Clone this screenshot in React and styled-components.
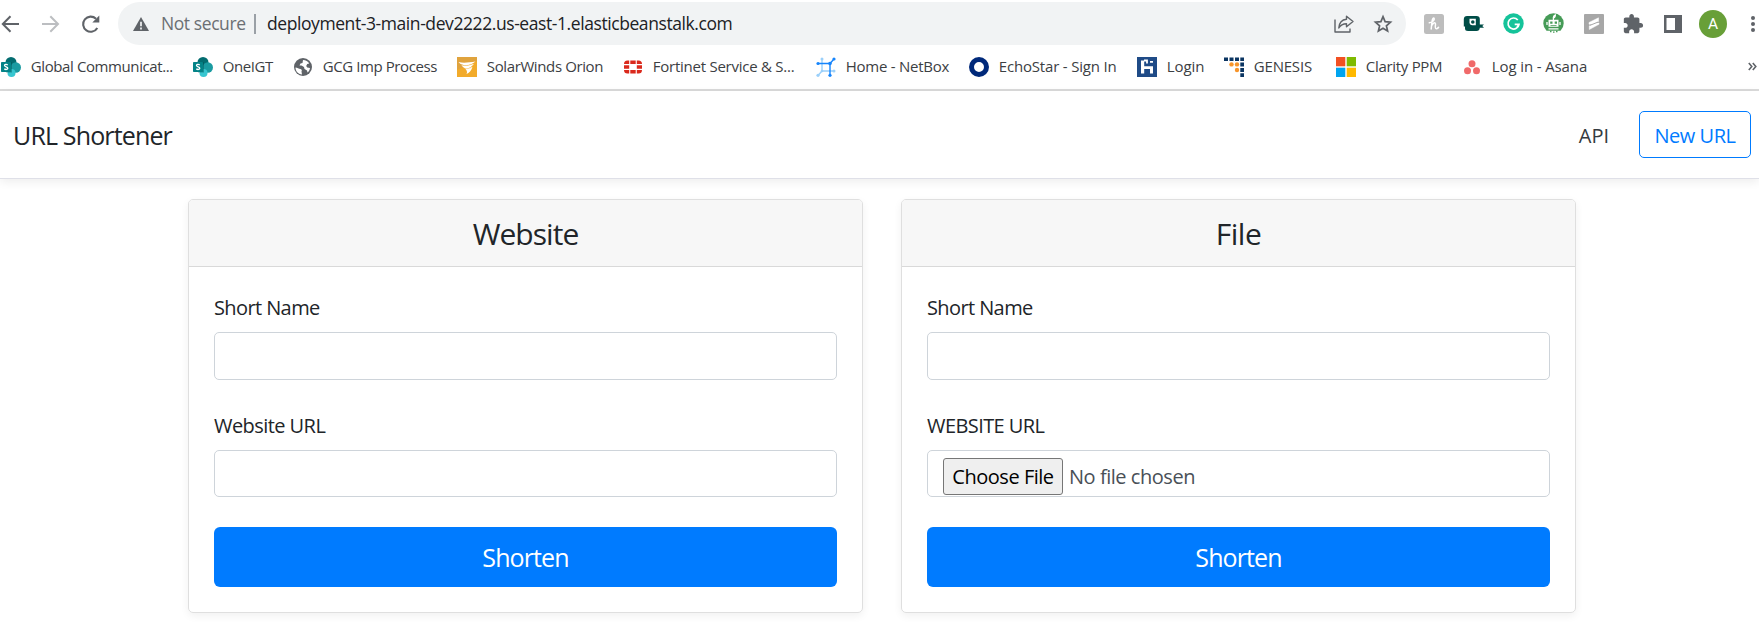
import React from "react";
import styled, { createGlobalStyle } from "styled-components";

const GlobalStyle = createGlobalStyle`
  * { box-sizing: border-box; }
  body {
    margin: 0;
    overflow: hidden;
    background: #fff;
    color: #212529;
    font-family: "Open Sans", "Noto Sans", sans-serif;
    font-size: 20px;
    line-height: 1.5;
  }
  button, input { font-family: inherit; }
  svg { display: block; flex: none; }
`;

const Page = styled.div`
  display: flex;
  flex-direction: column;
  height: 633px;
  overflow: hidden;
`;

const Text = styled.span`
  letter-spacing: ${(p) => p.$track || 0}px;
  white-space: nowrap;
`;

/* Browser toolbar */
const Toolbar = styled.div`
  display: flex;
  align-items: center;
  height: 45px;
  padding-top: 2px;
`;

const NavButtons = styled.div`
  display: flex;
  align-items: center;
  width: 118px;
  flex: none;
  gap: 20px;
`;

const AddressBar = styled.div`
  display: flex;
  align-items: center;
  width: 1288px;
  height: 43px;
  flex: none;
  padding: 0 13px 0 14px;
  border-radius: 22px;
  background: #f1f3f4;
  font-size: 17.5px;
  line-height: 24px;
`;

const Security = styled.div`
  display: flex;
  align-items: center;
  gap: 11px;
  width: 122px;
  color: #6b6f73;

  ${Text} {
    padding-bottom: 1px;
  }
`;

const Divider = styled.span`
  width: 2px;
  height: 20px;
  margin-right: 11px;
  background: #9aa0a6;
`;

const Address = styled.div`
  flex: 1;
  padding-bottom: 1px;
  color: #202124;
`;

const AddressActions = styled.div`
  display: flex;
  gap: 18px;
`;

const Extensions = styled.div`
  display: flex;
  align-items: center;
  flex: none;
  padding-left: 8px;
`;

const Slot = styled.div`
  display: flex;
  align-items: center;
  justify-content: center;
  width: 39.9px;
  flex: none;
`;

const Avatar = styled.div`
  width: 28px;
  height: 28px;
  border-radius: 50%;
  background: #689f38;
  color: #fff;
  font: 15.5px/29px Roboto, sans-serif;
  text-align: center;
`;

/* Bookmarks bar */
const Bookmarks = styled.div`
  display: flex;
  align-items: center;
  height: 46px;
  padding-left: 1px;
  border-bottom: 2px solid #dadada;
  color: #3c4043;
  font-size: 15px;
  line-height: 20px;
`;

const Bookmark = styled.div`
  display: flex;
  align-items: center;
  gap: 9.8px;
  width: ${(p) => p.$width}px;
  flex: none;

  ${Text} {
    padding-bottom: 2px;
  }
`;

const More = styled.div`
  margin: 0 2px 2px auto;
`;

/* Site header */
const Header = styled.header`
  display: flex;
  align-items: center;
  height: 88px;
  flex: none;
  padding: 0 8px 0 13px;
  border-bottom: 1px solid #dfe0e8;
  box-shadow: 0 3px 9px rgba(0, 0, 0, 0.07);
`;

const Brand = styled.div`
  margin-right: auto;
  padding-top: 2px;
  font-size: 25px;
`;

const NavLink = styled.a`
  margin-right: 30px;
  padding-top: 2px;
  color: #343a40;
`;

const OutlineButton = styled.button`
  width: 112px;
  height: 47px;
  padding: 2px 0 0;
  border: 1px solid #007bff;
  border-radius: 5px;
  background: #fff;
  color: #007bff;
  font-size: 20px;
`;

/* Forms */
const Deck = styled.main`
  display: flex;
  gap: 38px;
  margin: 20px 0 0 188px;
`;

const Card = styled.section`
  width: 675px;
  border: 1px solid #dfdfdf;
  border-radius: 5px;
  box-shadow: 0 3px 9px rgba(0, 0, 0, 0.06);
`;

const CardHeader = styled.h4`
  height: 67px;
  margin: 0;
  border-bottom: 1px solid #d9d9d9;
  border-radius: 4px 4px 0 0;
  background: #f7f7f7;
  font-size: 30px;
  font-weight: 400;
  line-height: 68px;
  text-align: center;
`;

const Form = styled.div`
  display: flex;
  flex-direction: column;
  padding: 26px 25px 24.5px;
`;

const Field = styled.label`
  display: flex;
  flex-direction: column;
  gap: 9px;
  margin-bottom: ${(p) => (p.$last ? 30 : 31)}px;
`;

const TextInput = styled.input`
  width: 100%;
  height: ${(p) => p.$height}px;
  border: 1px solid #ced4da;
  border-radius: 5px;
  background: #fff;
`;

const FileInput = styled.div`
  display: flex;
  gap: 6px;
  height: 47px;
  padding: 7px 15px 0;
  border: 1px solid #ced4da;
  border-radius: 5px;
  color: #495057;
  line-height: 38px;
`;

const ChooseButton = styled.button`
  width: 120px;
  height: 37px;
  padding: 0;
  border: 1px solid #767676;
  border-radius: 3px;
  background: #efefef;
  color: #000;
  font-size: 20px;
  line-height: 36px;
`;

const SubmitButton = styled.button`
  height: 60px;
  padding: 0;
  border: 0;
  border-radius: 6px;
  background: #007bff;
  color: #fff;
  font-size: 25px;
`;

const BackIcon = () => (
  <svg width="20" height="20" viewBox="0 0 20 20" fill="none" stroke="#5f6368" strokeWidth="2">
    <path d="M19 10H3M10.500 2.200 2.800 10l7.700 7.800" />
  </svg>
);
const ForwardIcon = () => (
  <svg width="20" height="20" viewBox="0 0 20 20" fill="none" stroke="#bcbec1" strokeWidth="2">
    <path d="M2 10h16M10.300 2.200 18 10l-7.700 7.800" />
  </svg>
);
const ReloadIcon = () => (
  <svg width="21" height="20" viewBox="0 0 21 20">
    <path d="M17.300 14A7.600 7.600 0 1 1 16 4.700" fill="none" stroke="#5f6368" strokeWidth="2.100" />
    <path d="M19.300 1.500v7h-7z" fill="#5f6368" />
  </svg>
);
const WarningIcon = () => (
  <svg width="18" height="16" viewBox="0 0 18 16">
    <path d="M9 1 17 15H1z" fill="#5f6368" />
    <path d="M9 5.800v4.400M9 11.500v2" stroke="#f1f3f4" strokeWidth="1.700" />
  </svg>
);
const ShareIcon = () => (
  <svg width="22" height="20" viewBox="0 0 22 20" fill="none" stroke="#5f6368" strokeWidth="1.400" strokeLinejoin="round">
    <path d="M2 5.500V18h15v-3.500" />
    <path d="M13.500 2.200 20 7.500l-6.500 5.300V9.700C9.700 9.700 7.500 11 5.800 14c.4-4.600 3-8.300 7.700-8.700z" />
  </svg>
);
const StarIcon = () => (
  <svg width="20" height="20" viewBox="0 0 20 20">
    <path d="m10 2.700 2.100 5 5.400.5-4.100 3.600 1.200 5.300-4.600-2.800-4.600 2.800 1.200-5.300-4.100-3.600 5.400-.5z" fill="none" stroke="#5f6368" strokeWidth="1.700" />
  </svg>
);

const HoneyIcon = () => (
  <svg width="20" height="20" viewBox="0 0 20 20">
    <rect width="20" height="20" rx="2.500" fill="#bdbdbd" />
    <path d="M5.300 8.800C8 8.300 10.800 6.500 10.200 4.600 9.600 3.200 8.300 4.800 8 7.500L7.200 15M7.500 12c1-2.300 2.800-3.700 3.700-3 1.100.9-.7 4 .4 5.300.9 1 2.300 0 3-1" fill="none" stroke="#fff" strokeWidth="1.500" strokeLinecap="round" />
  </svg>
);
const QIcon = () => (
  <svg width="21" height="17" viewBox="0 0 21 17">
    <path d="M4 1h9.500q3.300 0 3.300 3v5.500H21L19.300 11l1.700 1.700h-4.200q-.3 3.300-3.300 3.300H5q-3 0-3-2.500v-2H.8V4Q1 1 4 1z" fill="#004d47" />
    <path d="M6.500 3.800h6.300v6.400H9.500q-3 0-3-3z" fill="#fff" />
    <circle cx="9.800" cy="7" r="1.800" fill="#004d47" />
  </svg>
);
const GrammarIcon = () => (
  <svg width="21" height="21" viewBox="0 0 21 21">
    <circle cx="10.500" cy="10.500" r="10.200" fill="#15c39a" />
    <path d="M14.800 7A5.500 5.500 0 1 0 16 11.300h-4.300M13.800 14.600 16 11.300" fill="none" stroke="#fff" strokeWidth="1.700" />
  </svg>
);
const RobotIcon = () => (
  <svg width="21" height="21" viewBox="0 0 21 21">
    <path d="M3.500 17.800A10.200 10.200 0 1 1 17.500 17.800z" fill="#469b57" />
    <path d="M9.800 6.800C9.300 3.500 10.500 1.500 13 1c.3 2.500-.8 4-2 4.500v1.300h4.500v7h-10v-7z" fill="#fff" />
    <path d="M7.200 8.500h2.300v2.300H7.200zM11.700 8.500H14v2.300h-2.300zM7.500 12.300h6v.6h-6z" fill="#469b57" />
    <path d="M4 9v3M17 9v3M5.500 15.800h10" stroke="#fff" strokeWidth="1.300" />
    <path d="M7 18.500h1.500M10 19.200h1.500M13 18.500h1.500" stroke="#469b57" strokeWidth="1.300" />
  </svg>
);
const ScribeIcon = () => (
  <svg width="20" height="20" viewBox="0 0 20 20">
    <rect width="20" height="20" rx="1" fill="#a7a7a7" />
    <path d="M5 8.500 14.500 3.800v3.600L9 10.200H5zM15 10.300 5.300 15.500v-3.600l5.500-2.800H15z" fill="#fff" stroke="#fff" strokeWidth=".5" strokeLinejoin="round" />
    <path d="m6 11.300 8-3.200" stroke="#a7a7a7" strokeWidth="1" />
  </svg>
);
const PuzzleIcon = () => (
  <svg width="22" height="22" viewBox="0 0 24 24" fill="#5f6368">
    <path d="M20.500 11H19V7c0-1.100-.9-2-2-2h-4V3.500C13 2.100 11.900 1 10.500 1S8 2.100 8 3.500V5H4c-1.100 0-2 .9-2 2v3.800h1.500c1.500 0 2.700 1.200 2.700 2.700S5 16.200 3.500 16.200H2V20c0 1.100.9 2 2 2h3.800v-1.500c0-1.500 1.200-2.700 2.700-2.700s2.700 1.200 2.700 2.700V22H17c1.100 0 2-.9 2-2v-4h1.500c1.400 0 2.500-1.100 2.500-2.500S21.900 11 20.500 11z" />
  </svg>
);
const PanelIcon = () => (
  <svg width="18" height="18" viewBox="0 0 18 18">
    <path d="M0 0h18v18H0z" fill="#5f6368" />
    <path d="M2.500 3H11v12H2.500z" fill="#fff" />
  </svg>
);
const DotsIcon = () => (
  <svg width="6" height="18" viewBox="0 0 6 18" fill="#5f6368">
    <circle cx="3" cy="3" r="2" />
    <circle cx="3" cy="9" r="2" />
    <circle cx="3" cy="15" r="2" />
  </svg>
);

const SharePointIcon = () => (
  <svg width="20" height="20" viewBox="0 0 20 20">
    <circle cx="10" cy="5.500" r="5.500" fill="#036c70" />
    <circle cx="14.800" cy="10.500" r="5.200" fill="#1a9ba1" />
    <circle cx="10.500" cy="16" r="4" fill="#37c6d0" />
    <path d="M5 5h6v10.500H5z" fill="#025357" opacity=".45" />
    <rect y="5" width="10" height="10" rx=".8" fill="#038387" />
    <path d="M6.800 8C5.500 7.100 3.500 7.300 3.500 8.600c0 1.600 3.300 1 3.300 2.700 0 1.400-2.200 1.500-3.500.6" fill="none" stroke="#fff" strokeWidth="1.300" />
  </svg>
);
const GlobeIcon = () => (
  <svg width="20" height="20" viewBox="0 0 20 20">
    <circle cx="10" cy="10" r="9" fill="#5f6368" />
    <path d="M2.500 10.500c2 .3 3 1.500 5 1.500 1.500.3 1.500 1.500 1 2.500L9 17.500c-4-.4-6.500-3.500-6.500-7zM10 3c2.800 0 5 1.400 6.200 3.500l-2 .5-1 2 1 1.500 2.800.5c-.3 2-1.200 3.600-2.500 4.600l-.5-2.100-2.500-1.500-.5-2-2.500-1.500H6.500l1-2 2-.5z" fill="#fff" />
  </svg>
);
const SolarIcon = () => (
  <svg width="20" height="20" viewBox="0 0 20 20">
    <rect width="20" height="20" fill="#f2ab2b" />
    <path d="M0 0h20v4L0 13z" fill="#d9a046" opacity=".7" />
    <path d="M1.500 5C6 6.300 12 5.500 18.500 4.500 15 7.500 11 8.800 6.500 8 4.500 7.500 2.500 6.500 1.500 5z" fill="#fff" />
    <path d="M4.500 8c4 1.200 8.500.3 12.500-1.300-2.500 3.500-5 4.900-8 4.600-2-.2-3.700-1.500-4.500-3.300z" fill="#fff" />
    <path d="M7.500 11c3 .6 5.300.2 8-1.200-1.300 4-3.200 6-6 7.200 1.200-2 .4-4-2-6z" fill="#fff" />
    <path d="M5 8.200c3 .7 6 .4 9-.7M8 11.500c2 .4 4 .1 6-.8" stroke="#f2c46b" strokeWidth=".5" fill="none" />
  </svg>
);
const FortinetIcon = () => (
  <svg width="20" height="20" viewBox="0 0 20 20" fill="#da291c">
    <path d="M4.500 3.500H6.200v3.500H1q0-3.500 3.500-3.500zM7.300 3.500h5.400V7H7.300zM13.800 3.500h1.700q3.500 0 3.500 3.500h-5.200zM1 8.200h5.200v3.600H1zM13.800 8.200H19v3.600h-5.200zM1 13h5.200v3.500H4.500Q1 16.500 1 13zM7.300 13h5.400v3.500H7.300zM13.800 13H19q0 3.500-3.500 3.500h-1.700z" />
  </svg>
);
const NetBoxIcon = () => (
  <svg width="20" height="20" viewBox="0 0 20 20" strokeWidth="1.400">
    <path d="M6 2v12h12M6 14l-4 4.500" fill="none" stroke="#9bd0fa" />
    <path d="M2 6.500h12v12M14 6.500 18 2" fill="none" stroke="#1685fc" />
    <g fill="#9bd0fa"><circle cx="6" cy="2" r="1.500" /><circle cx="6" cy="14" r="1.300" /><circle cx="18" cy="14" r="1.500" /><circle cx="2" cy="18.300" r="1.600" /></g>
    <g fill="#1685fc"><circle cx="2" cy="6.500" r="1.600" /><circle cx="14" cy="6.500" r="1.800" /><circle cx="18" cy="2" r="1.600" /><circle cx="14" cy="18.300" r="1.600" /></g>
  </svg>
);
const EchoIcon = () => (
  <svg width="20" height="20" viewBox="0 0 20 20">
    <circle cx="10" cy="10" r="7.500" fill="none" stroke="#00297a" strokeWidth="5" />
  </svg>
);
const LoginIcon = () => (
  <svg width="20" height="20" viewBox="0 0 20 20">
    <rect width="20" height="20" fill="#1f4b87" />
    <path d="M4 3.500h3.200v5.700H16v7.300h-3V12H7.200v4.500H4z" fill="#fff" />
    <path d="M7 3.500h3v3M13 4.800h3" fill="none" stroke="#fff" strokeWidth="1.800" />
  </svg>
);
const GenesisIcon = () => (
  <svg width="20" height="20" viewBox="0 0 20 20">
    <path d="M0 .5h4V4H0zM5.500.5h4V4h-4zM11 .5h4V4h-4zM16.300.5H20V4h-3.700zM16.300 5.500H20v4h-3.700zM16.300 11H20v4h-3.700zM16.300 16.300H20V20h-3.700z" fill="#0b3562" />
    <g fill="#f7952b"><circle cx="7.500" cy="7.400" r="2.200" /><circle cx="13" cy="7.400" r="2.200" /><circle cx="13" cy="13" r="2.200" /></g>
  </svg>
);
const MicrosoftIcon = () => (
  <svg width="20" height="20" viewBox="0 0 20 20">
    <path d="M0 0h9.300v9.300H0z" fill="#f25022" />
    <path d="M10.700 0H20v9.300h-9.300z" fill="#7fba00" />
    <path d="M0 10.700h9.300V20H0z" fill="#00a4ef" />
    <path d="M10.700 10.700H20V20h-9.300z" fill="#ffb900" />
  </svg>
);
const AsanaIcon = () => (
  <svg width="20" height="20" viewBox="0 0 20 20" fill="#f06a6a">
    <circle cx="10" cy="6.700" r="3.500" />
    <circle cx="5.500" cy="13.700" r="3.500" />
    <circle cx="14.500" cy="13.700" r="3.500" />
  </svg>
);

const bookmarks = [
  { icon: SharePointIcon, label: "Global Communicat...", width: 192, track: -0.4 },
  { icon: SharePointIcon, label: "OneIGT", width: 100, track: -0.45 },
  { icon: GlobeIcon, label: "GCG Imp Process", width: 164, track: -0.42 },
  { icon: SolarIcon, label: "SolarWinds Orion", width: 166, track: -0.38 },
  { icon: FortinetIcon, label: "Fortinet Service & S...", width: 193, track: -0.25 },
  { icon: NetBoxIcon, label: "Home - NetBox", width: 153, track: -0.26 },
  { icon: EchoIcon, label: "EchoStar - Sign In", width: 168, track: -0.18 },
  { icon: LoginIcon, label: "Login", width: 87, track: -0.1 },
  { icon: GenesisIcon, label: "GENESIS", width: 112, track: -0.2 },
  { icon: MicrosoftIcon, label: "Clarity PPM", width: 126, track: -0.3 },
  { icon: AsanaIcon, label: "Log in - Asana", width: 130, track: -0.12 },
];

export default function App() {
  return (
    <Page>
      <GlobalStyle />
      <Toolbar>
        <NavButtons>
          <BackIcon />
          <ForwardIcon />
          <ReloadIcon />
        </NavButtons>
        <AddressBar>
          <Security>
            <WarningIcon />
            <Text $track={-0.42}>Not secure</Text>
          </Security>
          <Divider />
          <Address>
            <Text $track={-0.42}>deployment-3-main-dev2222.us-east-1.elasticbeanstalk.com</Text>
          </Address>
          <AddressActions>
            <ShareIcon />
            <StarIcon />
          </AddressActions>
        </AddressBar>
        <Extensions>
          <Slot><HoneyIcon /></Slot>
          <Slot><QIcon /></Slot>
          <Slot><GrammarIcon /></Slot>
          <Slot><RobotIcon /></Slot>
          <Slot><ScribeIcon /></Slot>
          <Slot><PuzzleIcon /></Slot>
          <Slot><PanelIcon /></Slot>
          <Slot><Avatar>A</Avatar></Slot>
          <Slot><DotsIcon /></Slot>
        </Extensions>
      </Toolbar>
      <Bookmarks>
        {bookmarks.map(({ icon: Icon, label, width, track }) => (
          <Bookmark key={label} $width={width}>
            <Icon />
            <Text $track={track}>{label}</Text>
          </Bookmark>
        ))}
        <More>
          <svg width="9" height="9" viewBox="0 0 9 9" fill="none" stroke="#5f6368" strokeWidth="1.600">
            <path d="m.8 1 3 3.500-3 3.500M4.800 1l3 3.500-3 3.500" />
          </svg>
        </More>
      </Bookmarks>
      <Header>
        <Brand><Text $track={-0.85}>URL Shortener</Text></Brand>
        <NavLink><Text>API</Text></NavLink>
        <OutlineButton><Text $track={-0.5}>New URL</Text></OutlineButton>
      </Header>
      <Deck>
        <Card>
          <CardHeader><Text $track={-0.95}>Website</Text></CardHeader>
          <Form>
            <Field>
              <Text $track={-0.6}>Short Name</Text>
              <TextInput $height={48} />
            </Field>
            <Field $last>
              <Text $track={-0.56}>Website URL</Text>
              <TextInput $height={47} />
            </Field>
            <SubmitButton><Text $track={-0.9}>Shorten</Text></SubmitButton>
          </Form>
        </Card>
        <Card>
          <CardHeader><Text $track={-0.5}>File</Text></CardHeader>
          <Form>
            <Field>
              <Text $track={-0.6}>Short Name</Text>
              <TextInput $height={48} />
            </Field>
            <Field $last>
              <Text $track={-0.58}>WEBSITE URL</Text>
              <FileInput>
                <ChooseButton><Text $track={-0.48}>Choose File</Text></ChooseButton>
                <Text $track={-0.46}>No file chosen</Text>
              </FileInput>
            </Field>
            <SubmitButton><Text $track={-0.9}>Shorten</Text></SubmitButton>
          </Form>
        </Card>
      </Deck>
    </Page>
  );
}
